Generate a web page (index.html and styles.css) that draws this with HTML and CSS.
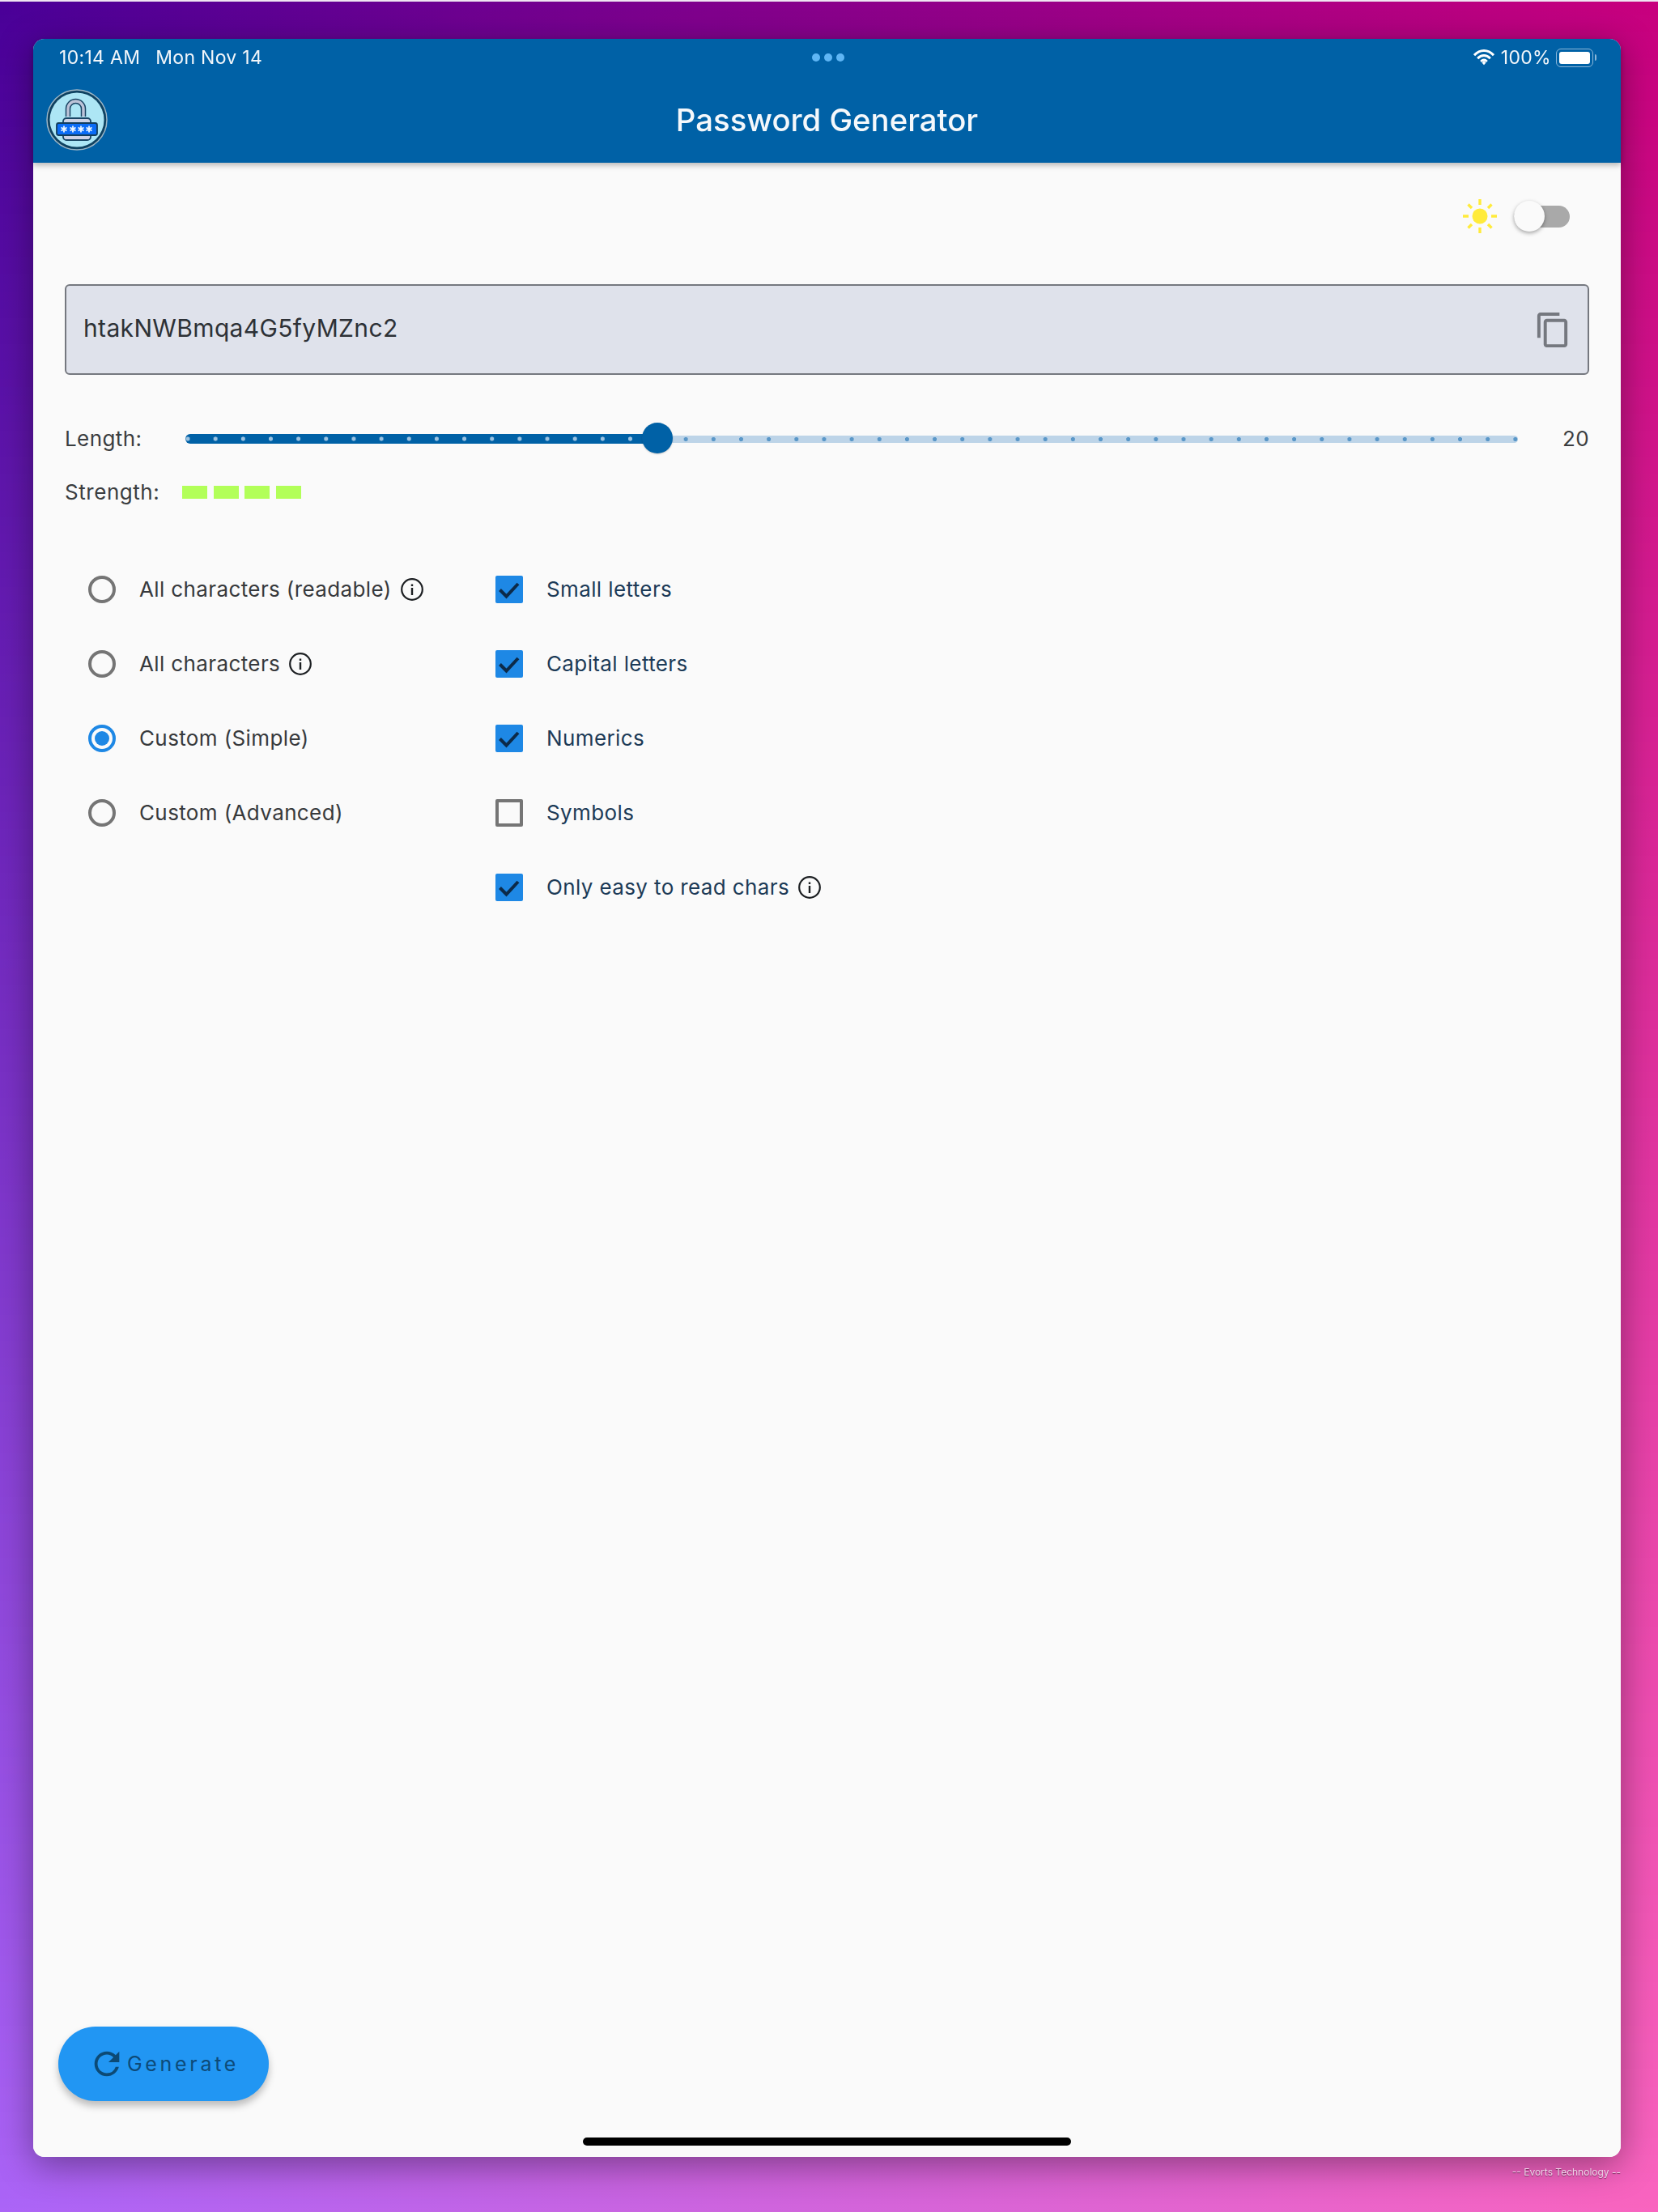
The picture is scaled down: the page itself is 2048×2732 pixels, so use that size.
FILE: index.html
```html
<!DOCTYPE html>
<html lang="en">
<head>
<meta charset="utf-8">
<title>Password Generator</title>
<link rel="stylesheet" href="styles.css">
</head>
<body>
<div class="desktop">
  <main class="window">
    <header class="appbar">
      <div class="status">
        <div class="status-left"><span>10:14 AM</span><span>Mon Nov 14</span></div>
        <div class="dots"><i></i><i></i><i></i></div>
        <div class="status-right">
          <svg class="wifi" viewBox="0 0 26 20" width="26" height="20"><path d="M1 7.2C8-.4 18-.4 25 7.2" class="w"/><path d="M5.2 11.2c4.700-4.900 10.900-4.900 15.600 0" class="w"/><path d="M9.200 15c2.400-2.300 5.200-2.300 7.600 0" class="w"/><path d="M10.500 16.500l2.500-2 2.500 2-2.500 2.700z" fill="#fff"/></svg>
          <span>100%</span>
          <div class="battery"><div class="battery-fill"></div></div>
          <div class="battery-tip"></div>
        </div>
      </div>
      <div class="toolbar">
        <svg class="logo" viewBox="0 0 76 76" width="76" height="76">
          <defs><path id="star" d="M0-4V4M-3.500-2L3.500 2M-3.500 2L3.500-2" stroke="#eaf5ff" stroke-width="1.800" fill="none"/></defs>
          <circle cx="38" cy="38" r="37" fill="#0f4261" stroke="#9db6c6" stroke-width="1.500"/>
          <circle cx="38" cy="38" r="33.500" fill="#ade6f5"/>
          <path d="M27 34V24.500a9.500 9.500 0 0 1 19 0V34" fill="none" stroke="#1a4564" stroke-width="6.500"/>
          <path d="M27 34V24.500a9.500 9.500 0 0 1 19 0V34" fill="none" stroke="#bcc3d8" stroke-width="3.500"/>
          <rect x="21" y="36" width="34" height="27" rx="4" fill="#cdd3e6" stroke="#1a4564" stroke-width="1.800"/>
          <rect x="13" y="42" width="50" height="15" rx="2.500" fill="#0a6cf6" stroke="#123e5e" stroke-width="1.800"/>
          <use href="#star" x="22" y="49.500"/><use href="#star" x="33" y="49.500"/><use href="#star" x="43" y="49.500"/><use href="#star" x="53" y="49.500"/>
        </svg>
        <h1 class="title">Password Generator</h1>
      </div>
    </header>

    <section class="content">
      <div class="theme-row">
        <svg class="sun" viewBox="0 0 42 42" width="42" height="42">
          <circle cx="21" cy="21" r="9.500" fill="#ffeb3b"/>
          <g stroke="#ffeb3b" stroke-width="3.400" stroke-linecap="butt">
            <path d="M21 0v7M21 35v7M0 21h7M35 21h7M6.500 6.500l4.500 4.500M31 31l4.500 4.500M6.500 35.500l4.500-4.500M31 11l4.500-4.500"/>
          </g>
        </svg>
        <div class="switch"><div class="switch-thumb"></div></div>
      </div>

      <div class="password">
        <span class="password-text">htakNWBmqa4G5fyMZnc2</span>
        <svg class="copy" viewBox="0 0 24 24" width="47" height="47"><path d="M16 1H4c-1.100 0-2 .9-2 2v14h2V3h12V1zm3 4H8c-1.100 0-2 .9-2 2v14c0 1.100.9 2 2 2h11c1.100 0 2-.9 2-2V7c0-1.100-.9-2-2-2zm0 16H8V7h11v14z" fill="#75787f"/></svg>
      </div>

      <div class="length-row">
        <span class="row-label">Length:</span>
        <div class="slider">
          <div class="track-on"></div>
          <div class="track-off"></div>
          <div class="slider-thumb"></div>
        </div>
        <span class="length-value">20</span>
      </div>

      <div class="strength-row">
        <span class="strength-label">Strength:</span>
        <div class="bars"><i></i><i></i><i></i><i></i></div>
      </div>

      <div class="options">
        <div class="col-radio">
          <div class="opt"><span class="radio"></span><span class="opt-text">All characters (readable)</span><svg class="info" viewBox="0 0 28 28" width="28" height="28"><circle cx="14" cy="14" r="12.800" fill="none" stroke="#1c1f22" stroke-width="2.200"/><rect x="12.800" y="12" width="2.400" height="9" fill="#1c1f22"/><rect x="12.800" y="7.500" width="2.400" height="2.500" fill="#1c1f22"/></svg></div>
          <div class="opt"><span class="radio"></span><span class="opt-text">All characters</span><svg class="info" viewBox="0 0 28 28" width="28" height="28"><circle cx="14" cy="14" r="12.800" fill="none" stroke="#1c1f22" stroke-width="2.200"/><rect x="12.800" y="12" width="2.400" height="9" fill="#1c1f22"/><rect x="12.800" y="7.500" width="2.400" height="2.500" fill="#1c1f22"/></svg></div>
          <div class="opt"><span class="radio radio-on"></span><span class="opt-text">Custom (Simple)</span></div>
          <div class="opt"><span class="radio"></span><span class="opt-text">Custom (Advanced)</span></div>
        </div>
        <div class="col-check">
          <div class="opt"><span class="check"><svg viewBox="0 0 34 34" width="34" height="34"><path d="M5.500 17.500l8 8L28 10" class="tick"/></svg></span><span class="opt-text navy">Small letters</span></div>
          <div class="opt"><span class="check"><svg viewBox="0 0 34 34" width="34" height="34"><path d="M5.500 17.500l8 8L28 10" class="tick"/></svg></span><span class="opt-text navy">Capital letters</span></div>
          <div class="opt"><span class="check"><svg viewBox="0 0 34 34" width="34" height="34"><path d="M5.500 17.500l8 8L28 10" class="tick"/></svg></span><span class="opt-text navy">Numerics</span></div>
          <div class="opt"><span class="check check-off"></span><span class="opt-text navy">Symbols</span></div>
          <div class="opt"><span class="check"><svg viewBox="0 0 34 34" width="34" height="34"><path d="M5.500 17.500l8 8L28 10" class="tick"/></svg></span><span class="opt-text navy">Only easy to read chars</span><svg class="info" viewBox="0 0 28 28" width="28" height="28"><circle cx="14" cy="14" r="12.800" fill="none" stroke="#1c1f22" stroke-width="2.200"/><rect x="12.800" y="12" width="2.400" height="9" fill="#1c1f22"/><rect x="12.800" y="7.500" width="2.400" height="2.500" fill="#1c1f22"/></svg></div>
        </div>
      </div>

      <button class="generate" type="button">
        <svg viewBox="0 0 24 24" width="46" height="46"><path d="M17.650 6.350A7.958 7.958 0 0 0 12 4c-4.420 0-7.990 3.580-7.990 8s3.570 8 7.990 8c3.730 0 6.840-2.550 7.730-6h-2.080A5.990 5.990 0 0 1 12 18c-3.310 0-6-2.690-6-6s2.690-6 6-6c1.660 0 3.140.69 4.220 1.780L13 11h7V4l-2.350 2.350z" fill="#0c4a75"/></svg>
        <span>Generate</span>
      </button>
      <div class="home-bar"></div>
    </section>
  </main>
  <footer class="credit">-- Evorts Technology --</footer>
</div>
</body>
</html>
```

FILE: styles.css
```css
* { box-sizing: border-box; }
html, body { margin: 0; padding: 0; }
body { width: 2048px; height: 2732px; overflow: hidden; font-family: "Inter", "Liberation Sans", sans-serif; }

.desktop {
  position: relative;
  width: 2048px;
  height: 2732px;
  padding: 48px 46px 0 41px;
  border-top: 2px solid #efe6f2;
  background: linear-gradient(to right, #4a0098, #c8007e);
  display: flex;
  flex-direction: column;
}
.desktop::before {
  content: "";
  position: absolute;
  inset: 0;
  background: linear-gradient(to right, #ab64f7, #f964bf);
  -webkit-mask-image: linear-gradient(to bottom, transparent, #000);
  mask-image: linear-gradient(to bottom, transparent, #000);
}

.window {
  position: relative;
  width: 1961px;
  height: 2616px;
  margin-top: -2px;
  border-radius: 14px;
  background: #fafafa;
  display: flex;
  flex-direction: column;
  filter: drop-shadow(0 10px 22px rgba(0,0,0,.38));
}

.appbar {
  position: relative;
  z-index: 2;
  height: 153px;
  background: #0061a6;
  border-radius: 14px 14px 0 0;
  box-shadow: 0 3px 7px rgba(0,0,0,.28);
  color: #fff;
  display: flex;
  flex-direction: column;
}
.status {
  height: 46px;
  padding: 0 30px 0 32px;
  display: grid;
  grid-template-columns: 1fr auto 1fr;
  align-items: center;
  font-size: 23px;
  letter-spacing: .3px;
  color: #f2f6fa;
}
.status-left { display: flex; gap: 19px; }
.dots { display: flex; gap: 5px; }
.dots i { width: 10px; height: 10px; border-radius: 50%; background: #5fb6f5; }
.status-right { display: flex; align-items: center; justify-content: flex-end; gap: 6px; }
.wifi { margin-right: 2px; }
.w { fill: none; stroke: #fff; stroke-width: 3; }
.battery { width: 46px; height: 23px; padding: 3px; border: 1.500px solid #8cb7d9; border-radius: 6px; }
.battery-fill { width: 100%; height: 100%; background: #fff; border-radius: 3px; }
.battery-tip { width: 2px; height: 8px; margin-left: -4px; background: #8cb7d9; border-radius: 0 2px 2px 0; }

.toolbar {
  position: relative;
  flex: 1;
  display: flex;
  align-items: center;
  justify-content: center;
}
.logo { position: absolute; left: 16px; top: 16px; }
.title { margin: 0; font-size: 38.300px; font-weight: 500; color: #f5f8fb; }

.content {
  position: relative;
  flex: 1;
  padding: 47px 39px 69px;
  display: flex;
  flex-direction: column;
  background: #fafafa;
  border-radius: 0 0 14px 14px;
}

.theme-row { display: flex; justify-content: flex-end; align-items: center; height: 38px; padding-right: 24px; gap: 21px; }
.switch { position: relative; width: 69px; height: 27px; background: #a9a9a9; border-radius: 14px; }
.switch-thumb {
  position: absolute; left: 0; top: -6px;
  width: 38px; height: 38px; border-radius: 50%;
  background: #fafafa;
  box-shadow: 0 2px 5px rgba(0,0,0,.35);
}

.password {
  margin-top: 65px;
  height: 112px;
  padding: 0 19px 0 21px;
  border: 2px solid #75787f;
  border-radius: 6px;
  background: #dfe2eb;
  display: flex;
  align-items: center;
  justify-content: space-between;
}
.password-text { font-size: 30px; color: #2d3136; letter-spacing: .35px; padding-bottom: 4px; }

.length-row { margin-top: 60px; height: 38px; display: flex; align-items: center; }
.row-label { width: 149px; font-size: 26px; letter-spacing: .4px; color: #3a3d40; padding-bottom: 2px; }
.slider { position: relative; width: 1646px; display: flex; align-items: center; }
.track-on {
  width: 584px; height: 12px;
  border-radius: 6px 0 0 6px;
  background: radial-gradient(circle, #9cc2e0 2.300px, transparent 2.900px) -14.080px 0 / 34.170px 100% repeat-x #0061a6;
}
.track-off {
  flex: 1; height: 9px;
  border-radius: 0 5px 5px 0;
  background: radial-gradient(circle, #5a97c8 2.300px, transparent 2.900px) -17.080px 0 / 34.170px 100% repeat-x #bdd4e8;
}
.slider-thumb {
  position: absolute; left: 564px; top: -14px;
  width: 38px; height: 38px; border-radius: 50%;
  background: #0061a6;
  box-shadow: 0 1px 2px rgba(0,0,0,.2);
}
.length-value { flex: 1; text-align: right; font-size: 26px; letter-spacing: .4px; color: #3a3d40; padding-bottom: 2px; }

.strength-row { margin-top: 32px; height: 30px; display: flex; align-items: center; }
.strength-label { width: 145px; font-size: 26px; letter-spacing: .55px; color: #3a3d40; padding-bottom: 2px; }
.bars { display: flex; gap: 7.500px; }
.bars i { width: 31px; height: 16px; background: #b2ff59; }

.options { margin-top: 59px; padding-left: 29px; display: flex; }
.col-radio { width: 503px; }
.opt { height: 92px; display: flex; align-items: center; }
.radio { width: 34px; height: 34px; border: 4px solid #757575; border-radius: 50%; display: flex; align-items: center; justify-content: center; }
.radio-on { border-color: #1e88e5; }
.radio-on::after { content: ""; width: 18px; height: 18px; border-radius: 50%; background: #1e88e5; }
.opt-text { margin-left: 29px; font-size: 26px; letter-spacing: .38px; color: #37393c; padding-bottom: 2px; }
.navy { color: #1c3a57; }
.info { margin-left: 11px; }
.check { width: 34px; height: 34px; background: #1e88e5; border-radius: 2px; display: block; }
.check svg { display: block; }
.tick { fill: none; stroke: #0c2a49; stroke-width: 4; }
.check-off { background: transparent; border: 4px solid #757575; }

.generate {
  margin-top: auto;
  margin-left: -8px;
  align-self: flex-start;
  width: 260px;
  height: 92px;
  border: 0;
  border-radius: 46px;
  background: #2196f3;
  box-shadow: 0 6px 10px rgba(0,0,0,.25);
  display: flex;
  align-items: center;
  justify-content: center;
  gap: 2px;
  color: #0d4a78;
  font-family: "Inter", "Liberation Sans", sans-serif;
  font-size: 25px;
  letter-spacing: 3.700px;
  padding: 0;
}
.home-bar {
  position: absolute;
  left: 679px;
  bottom: 14px;
  width: 603px;
  height: 10px;
  border-radius: 5px;
  background: #000;
}

.credit {
  position: relative;
  margin-top: 11px;
  width: 1961px;
  text-align: right;
  font-size: 12px;
  color: #f0d3ea;
  text-shadow: 0 1px 1px rgba(0,0,0,.45);
}
```
